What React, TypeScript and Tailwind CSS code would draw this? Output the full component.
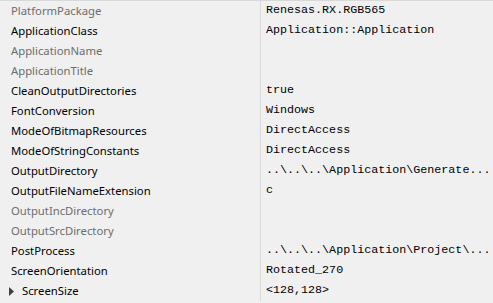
const rows: { name: string; value: string; dim?: boolean; expand?: boolean }[] = [
  { name: 'PlatformPackage', value: 'Renesas.RX.RGB565', dim: true },
  { name: 'ApplicationClass', value: 'Application::Application' },
  { name: 'ApplicationName', value: '', dim: true },
  { name: 'ApplicationTitle', value: '', dim: true },
  { name: 'CleanOutputDirectories', value: 'true' },
  { name: 'FontConversion', value: 'Windows' },
  { name: 'ModeOfBitmapResources', value: 'DirectAccess' },
  { name: 'ModeOfStringConstants', value: 'DirectAccess' },
  { name: 'OutputDirectory', value: '..\\..\\..\\Application\\Generate...' },
  { name: 'OutputFileNameExtension', value: 'c' },
  { name: 'OutputIncDirectory', value: '', dim: true },
  { name: 'OutputSrcDirectory', value: '', dim: true },
  { name: 'PostProcess', value: '..\\..\\..\\Application\\Project\\...' },
  { name: 'ScreenOrientation', value: 'Rotated_270' },
  { name: 'ScreenSize', value: '<128,128>', expand: true },
];

export default function App() {
  return (
    <div className="w-[493px] h-[303px] bg-[#f0f0f0] border-t border-[#d9d9d9] overflow-hidden">
      {rows.map((r) => (
        <div key={r.name} className="flex h-[20px] items-center">
          <div className="w-[261px] h-full flex items-center border-r border-[#dadada] shrink-0">
            {r.expand ? (
              <svg width="22" height="20" viewBox="0 0 22 20" className="shrink-0">
                <path d="M9 6 L14 10.5 L9 15 Z" fill="#404040" />
              </svg>
            ) : (
              <span className="w-[11px] shrink-0" />
            )}
            <span
              className={`text-[11.3px] font-['Noto_Sans',sans-serif] whitespace-nowrap ${
                r.dim ? 'text-[#6d6d6d]' : 'text-black'
              }`}
            >
              {r.name}
            </span>
          </div>
          <div className="pl-[5px] text-[11.7px] font-['Liberation_Mono',monospace] text-black whitespace-nowrap">
            {r.value}
          </div>
        </div>
      ))}
    </div>
  );
}
